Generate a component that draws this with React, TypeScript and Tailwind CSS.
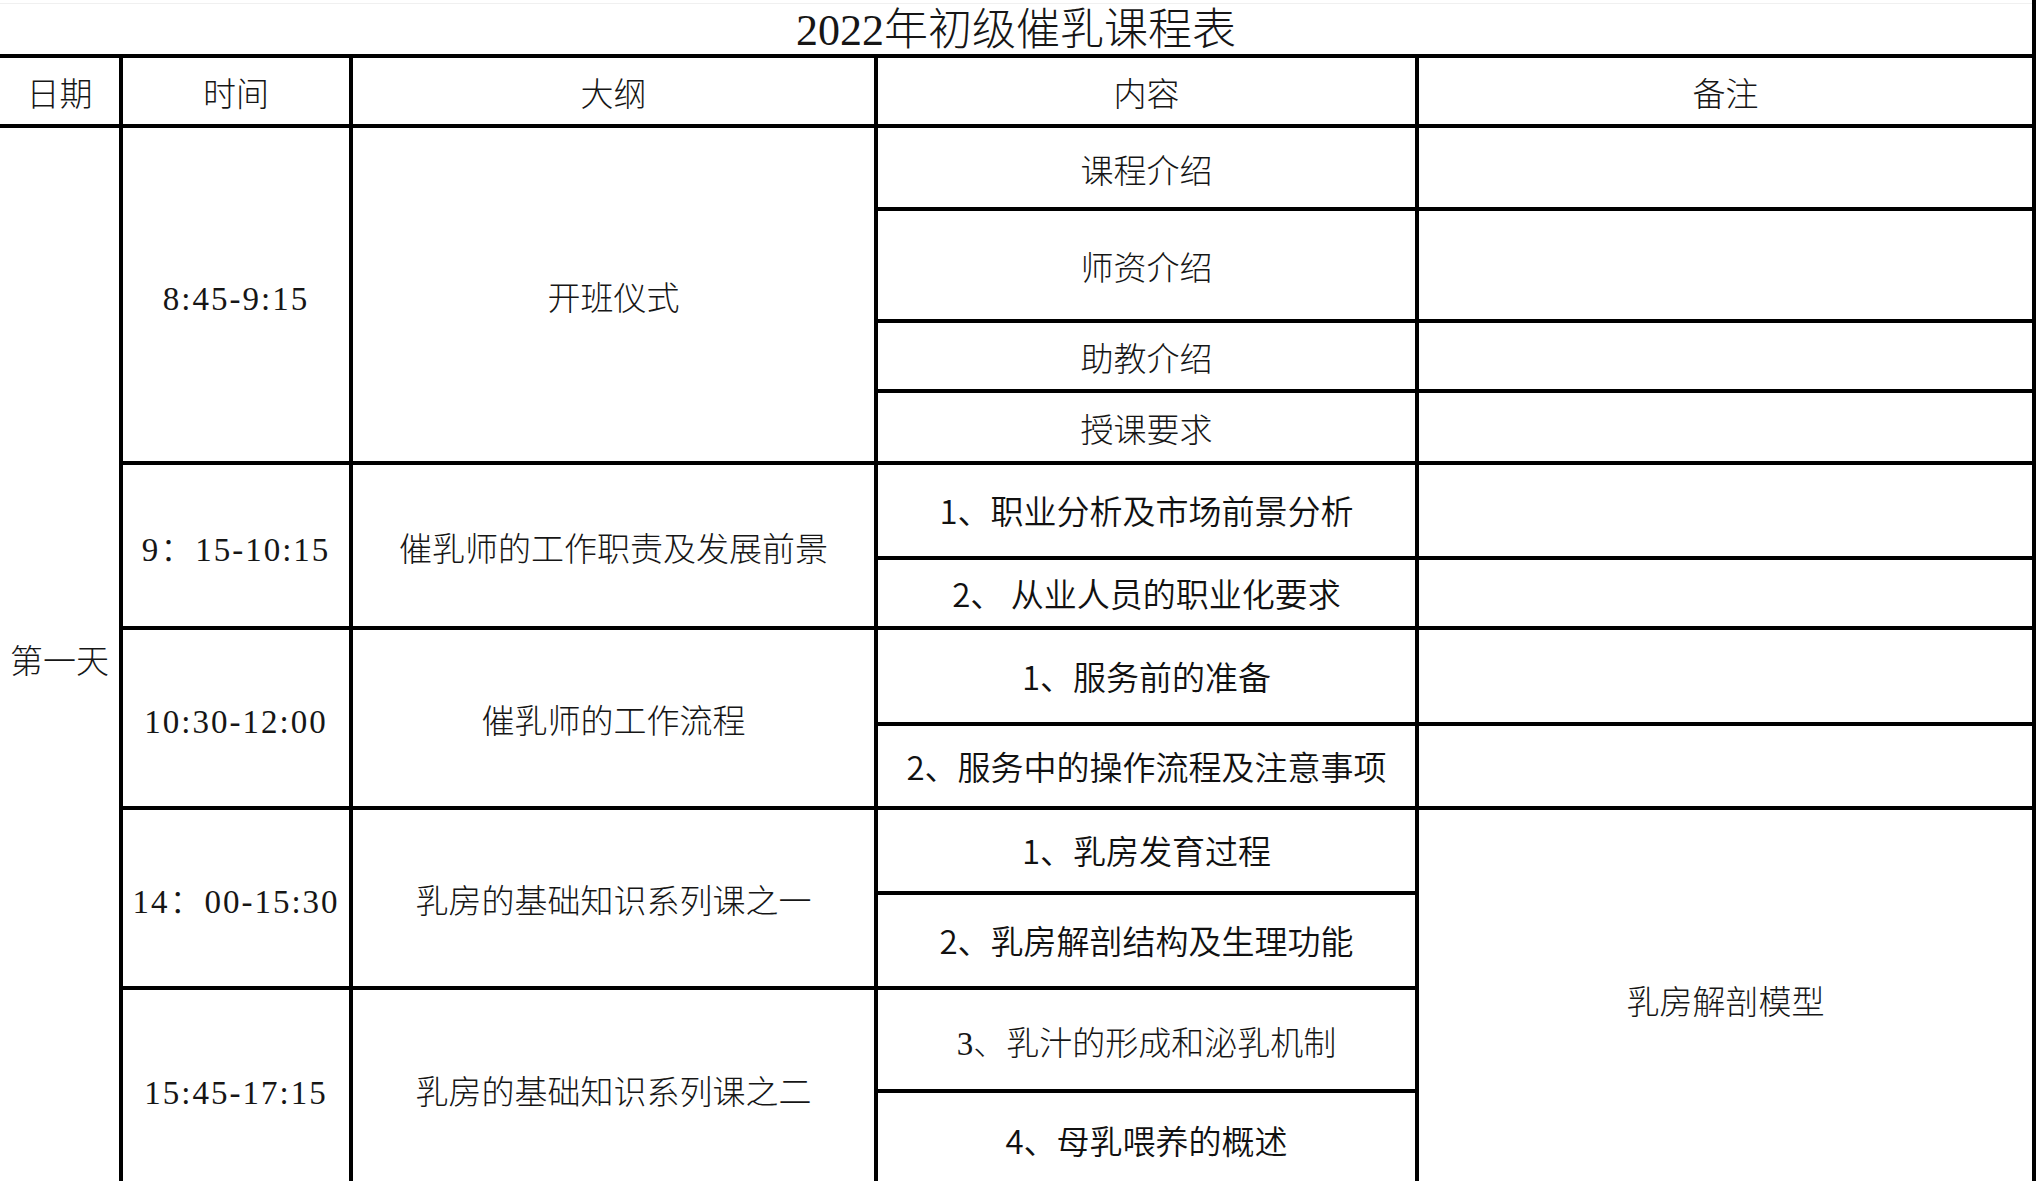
const serif = "font-['Liberation_Serif','Noto_Sans_CJK_SC',serif] font-light text-[#161616] pt-[9px]"
const sans = "font-['Noto_Sans_CJK_SC','Liberation_Sans',sans-serif] font-[350] text-[#111]"

function Cell({
  children,
  className = "",
  kind = "serif",
}: {
  children?: React.ReactNode
  className?: string
  kind?: "serif" | "sans"
}) {
  return (
    <div
      className={`bg-white flex items-center justify-center text-center text-[33px] leading-none whitespace-nowrap ${
        kind === "serif" ? serif : sans
      } ${className}`}
    >
      {children}
    </div>
  )
}

export default function App() {
  return (
    <div className="w-[2039px] h-[1181px] overflow-hidden bg-white">
      <div className="w-[2036px]">
        <div className="h-[54px] border-r-4 border-black pt-[3px]">
          <div className="h-full border-t border-[#f0f0f0] flex items-center justify-center pt-[4px]">
            <span className="font-['Liberation_Serif','Noto_Sans_CJK_SC',serif] font-light text-[#161616] text-[44px] leading-none">
              2022年初级催乳课程表
            </span>
          </div>
        </div>

        <div className="grid bg-black gap-[4px] pt-[4px] pr-[4px] pb-[4px] grid-cols-[119px_226px_521px_537px_613px] grid-rows-[66px_79px_108px_66px_68px_91px_66px_92px_80px_81px_91px_99px_95px]">
          {/* header */}
          <Cell>日期</Cell>
          <Cell>时间</Cell>
          <Cell>大纲</Cell>
          <Cell>内容</Cell>
          <Cell>备注</Cell>

          {/* day column */}
          <Cell className="col-start-1 row-start-2 row-span-12">第一天</Cell>

          {/* time + outline */}
          <Cell className="col-start-2 row-start-2 row-span-4 tracking-[2px]">8:45-9:15</Cell>
          <Cell className="col-start-3 row-start-2 row-span-4">开班仪式</Cell>
          <Cell className="col-start-2 row-start-6 row-span-2 tracking-[2px]">9：15-10:15</Cell>
          <Cell className="col-start-3 row-start-6 row-span-2">催乳师的工作职责及发展前景</Cell>
          <Cell className="col-start-2 row-start-8 row-span-2 tracking-[2px]">10:30-12:00</Cell>
          <Cell className="col-start-3 row-start-8 row-span-2">催乳师的工作流程</Cell>
          <Cell className="col-start-2 row-start-10 row-span-2 tracking-[2px]">14：00-15:30</Cell>
          <Cell className="col-start-3 row-start-10 row-span-2">乳房的基础知识系列课之一</Cell>
          <Cell className="col-start-2 row-start-12 row-span-2 tracking-[2px]">15:45-17:15</Cell>
          <Cell className="col-start-3 row-start-12 row-span-2">乳房的基础知识系列课之二</Cell>

          {/* content + notes */}
          <Cell className="col-start-4 row-start-2">课程介绍</Cell>
          <Cell className="col-start-5 row-start-2" />
          <Cell className="col-start-4 row-start-3">师资介绍</Cell>
          <Cell className="col-start-5 row-start-3" />
          <Cell className="col-start-4 row-start-4">助教介绍</Cell>
          <Cell className="col-start-5 row-start-4" />
          <Cell className="col-start-4 row-start-5">授课要求</Cell>
          <Cell className="col-start-5 row-start-5" />
          <Cell kind="sans" className="col-start-4 row-start-6">1、职业分析及市场前景分析</Cell>
          <Cell className="col-start-5 row-start-6" />
          <Cell kind="sans" className="col-start-4 row-start-7 whitespace-pre">2、 从业人员的职业化要求</Cell>
          <Cell className="col-start-5 row-start-7" />
          <Cell kind="sans" className="col-start-4 row-start-8">1、服务前的准备</Cell>
          <Cell className="col-start-5 row-start-8" />
          <Cell kind="sans" className="col-start-4 row-start-9">2、服务中的操作流程及注意事项</Cell>
          <Cell className="col-start-5 row-start-9" />
          <Cell kind="sans" className="col-start-4 row-start-10">1、乳房发育过程</Cell>
          <Cell kind="sans" className="col-start-4 row-start-11">2、乳房解剖结构及生理功能</Cell>
          <Cell className="col-start-4 row-start-12">3、乳汁的形成和泌乳机制</Cell>
          <Cell kind="sans" className="col-start-4 row-start-13">4、母乳喂养的概述</Cell>
          <Cell className="col-start-5 row-start-10 row-span-4">乳房解剖模型</Cell>
        </div>
      </div>
    </div>
  )
}
